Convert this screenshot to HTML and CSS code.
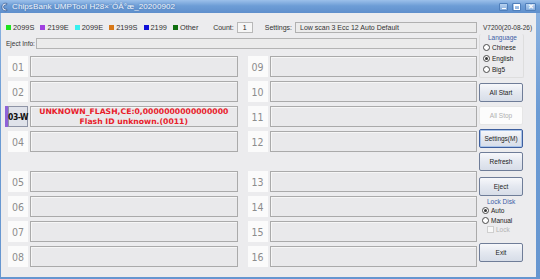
FILE: index.html
```html
<!DOCTYPE html>
<html lang="en">
<head>
  <meta charset="UTF-8" />
  <title>ChipsBank UMPTool</title>
  <link rel="stylesheet" href="styles.css">
</head>
<body>
  <div class="window">
    <!-- Title bar -->
    <div class="titlebar">
      <svg class="app-icon" width="7" height="10" viewBox="0 0 7 10">
        <path d="M6 1.5 C3 0.5 1 2.5 1 5 C1 7.5 3 9.5 6 8.5 L5.5 7 C3.8 7.6 2.6 6.5 2.6 5 C2.6 3.5 3.8 2.4 5.5 3 Z" fill="#f4f8ff" stroke="#1d3f7a" stroke-width="0.6"/>
      </svg>
      <span class="title">ChipsBank UMPTool H28×¨ÓÂ°æ_20200902</span>
      <div class="caption">
        <span class="cap cap-min"></span>
        <span class="cap cap-max"></span>
        <span class="cap cap-close">&#x2715;</span>
      </div>
    </div>

    <div class="client">
      <!-- Legend / count / settings -->
      <div class="toprow">
        <div class="main-top">
          <div class="legend">
            <span class="key"><i class="swatch c-2099s"></i>2099S</span>
            <span class="key"><i class="swatch c-2199e"></i>2199E</span>
            <span class="key"><i class="swatch c-2099e"></i>2099E</span>
            <span class="key"><i class="swatch c-2199s"></i>2199S</span>
            <span class="key"><i class="swatch c-2199"></i>2199</span>
            <span class="key"><i class="swatch c-other"></i>Other</span>
          </div>
          <span class="count-label">Count:</span>
          <span class="count-box">1</span>
          <span class="settings-label">Settings:</span>
          <span class="settings-box">Low scan 3 Ecc 12 Auto Default</span>
        </div>
        <span class="version">V7200(20-08-26)</span>
      </div>

      <div class="content">
        <div class="main">
          <div class="eject-row">
            <span class="eject-label">Eject Info:</span>
            <div class="eject-box"></div>
          </div>

          <div class="slots">
            <div class="slot-col">
              <div class="slot-group">
                <div class="slot"><span class="slot-num">01</span><div class="slot-box"></div></div>
                <div class="slot"><span class="slot-num">02</span><div class="slot-box"></div></div>
                <div class="slot"><span class="slot-num active">03-W</span>
                  <div class="slot-box error-box">
                    <span>UNKNOWN_FLASH,CE:0,0000000000000000</span>
                    <span>Flash ID unknown.(0011)</span>
                  </div>
                </div>
                <div class="slot"><span class="slot-num">04</span><div class="slot-box"></div></div>
              </div>
              <div class="slot-group">
                <div class="slot"><span class="slot-num">05</span><div class="slot-box"></div></div>
                <div class="slot"><span class="slot-num">06</span><div class="slot-box"></div></div>
                <div class="slot"><span class="slot-num">07</span><div class="slot-box"></div></div>
                <div class="slot"><span class="slot-num">08</span><div class="slot-box"></div></div>
              </div>
            </div>
            <div class="slot-col">
              <div class="slot-group">
                <div class="slot"><span class="slot-num">09</span><div class="slot-box"></div></div>
                <div class="slot"><span class="slot-num">10</span><div class="slot-box"></div></div>
                <div class="slot"><span class="slot-num">11</span><div class="slot-box"></div></div>
                <div class="slot"><span class="slot-num">12</span><div class="slot-box"></div></div>
              </div>
              <div class="slot-group">
                <div class="slot"><span class="slot-num">13</span><div class="slot-box"></div></div>
                <div class="slot"><span class="slot-num">14</span><div class="slot-box"></div></div>
                <div class="slot"><span class="slot-num">15</span><div class="slot-box"></div></div>
                <div class="slot"><span class="slot-num">16</span><div class="slot-box"></div></div>
              </div>
            </div>
          </div>
        </div>

        <!-- Right side panel -->
        <div class="side">
          <div class="group lang-group">
            <span class="group-title">Language</span>
            <label class="radio"><i class="dot"></i>Chinese</label>
            <label class="radio"><i class="dot checked"></i>English</label>
            <label class="radio"><i class="dot"></i>Big5</label>
          </div>

          <button class="btn btn-start">All Start</button>
          <button class="btn btn-disabled">All Stop</button>
          <button class="btn btn-focus">Settings(M)</button>
          <button class="btn">Refresh</button>
          <button class="btn btn-eject">Eject</button>

          <div class="group lock-group">
            <span class="group-title">Lock Disk</span>
            <label class="radio"><i class="dot checked"></i>Auto</label>
            <label class="radio"><i class="dot"></i>Manual</label>
            <label class="radio check-row"><i class="check"></i>Lock</label>
          </div>

          <button class="btn btn-exit">Exit</button>
        </div>
      </div>
    </div>
  </div>
</body>
</html>
```

FILE: styles.css
```css
* {
  box-sizing: border-box;
}

body {
  margin: 0;
  font-family: 'Liberation Sans', Arial, sans-serif;
  font-size: 7px;
  color: #222;
}

.window {
  width: 540px;
  height: 279px;
  display: flex;
  flex-direction: column;
  background: linear-gradient(180deg, #8fb5e2, #6b9bd4 40%, #6696d0);
}

/* Title bar */
.titlebar {
  height: 13px;
  display: flex;
  align-items: center;
  padding: 0 4px 0 1px;
  background: linear-gradient(180deg, #9cc0ea 0%, #6d9dd6 45%, #5f8fcc 100%);
}

.app-icon {
  margin-right: 4px;
}

.title {
  font-size: 8px;
  color: #f2f6fc;
  text-shadow: 0 0 2px #3f6aa4;
  letter-spacing: 0.1px;
  white-space: nowrap;
}

.caption {
  margin-left: auto;
  display: flex;
  gap: 4px;
  align-items: center;
}

.cap {
  display: flex;
  align-items: center;
  justify-content: center;
  width: 9px;
  height: 8px;
  border: 1px solid #4f7fbb;
  border-radius: 1px;
  background: linear-gradient(180deg, #b9d3f0, #85acdc);
  color: #fff;
  font-size: 7px;
  line-height: 1;
}

.cap-min::after {
  content: "";
  width: 4px;
  height: 1px;
  margin-top: 3px;
  background: #fff;
}

.cap-max::after {
  content: "";
  width: 4px;
  height: 3px;
  border: 1px solid #fff;
  border-top-width: 2px;
}

.cap-close {
  width: 11px;
  font-weight: bold;
}

/* Client area */
.client {
  flex: 1;
  margin: 0 4px 2px 1px;
  background: #ececee;
  display: flex;
  flex-direction: column;
}

.toprow {
  display: flex;
  align-items: center;
  height: 12px;
  margin-top: 8px;
}

.main-top {
  width: 476px;
  padding-left: 5px;
  display: flex;
  align-items: center;
}

.legend {
  display: flex;
  gap: 6px;
  font-size: 7.4px;
  color: #333;
}

.key {
  display: flex;
  align-items: center;
  gap: 2px;
}

.swatch {
  display: inline-block;
  width: 5px;
  height: 5px;
}

.c-2099s { background: #1ee31e; }
.c-2199e { background: #a040e0; }
.c-2099e { background: #38f0f0; }
.c-2199s { background: #d87818; }
.c-2199  { background: #1010d8; }
.c-other { background: #107010; }

.count-label {
  margin-left: auto;
  color: #333;
}

.count-box {
  width: 16px;
  height: 11px;
  margin: 0 12px 0 3px;
  background: #f6f6f6;
  border: 1px solid #b8b8b8;
  display: flex;
  align-items: center;
  justify-content: center;
}

.settings-label {
  margin-right: 3px;
  color: #333;
}

.settings-box {
  width: 182px;
  height: 11px;
  padding-left: 4px;
  background: #ebebeb;
  border: 1px solid #b0b0b0;
  display: flex;
  align-items: center;
  color: #333;
}

.version {
  margin-left: 6px;
  font-size: 6.5px;
  color: #333;
  white-space: nowrap;
}

.content {
  flex: 1;
  display: flex;
}

.main {
  width: 476px;
  padding-left: 5px;
}

.eject-row {
  display: flex;
  align-items: center;
  height: 12px;
  margin-top: 4px;
}

.eject-label {
  width: 30px;
  color: #333;
  font-size: 6.5px;
  white-space: nowrap;
}

.eject-box {
  flex: 1;
  height: 11px;
  background: #ebebeb;
  border: 1px solid #b4b4b4;
}

/* Slots */
.slots {
  display: grid;
  grid-template-columns: 1fr 1fr;
  column-gap: 10px;
  margin: 7px 0 0 2px;
}

.slot-col {
  display: flex;
  flex-direction: column;
  gap: 19px;
}

.slot-group {
  display: flex;
  flex-direction: column;
  gap: 4px;
}

.slot {
  display: flex;
  height: 21px;
}

.slot-num {
  width: 20px;
  flex: none;
  margin-right: 2px;
  background: #fbfbfb;
  color: #8c8c8c;
  font-family: 'DejaVu Sans Condensed', 'DejaVu Sans', sans-serif;
  font-stretch: condensed;
  font-size: 10.5px;
  display: flex;
  align-items: center;
  justify-content: center;
  white-space: nowrap;
}

.slot-num.active {
  background: #dfe2ea;
  border: 1px solid #8e94a6;
  color: #111;
  font-weight: bold;
  font-size: 8.5px;
  box-shadow: -3px 0 0 #8f62d8;
  letter-spacing: -0.5px;
}

.slot-box {
  flex: 1;
  background: #e9e9eb;
  border: 1px solid #aaaaaa;
  box-shadow: inset 1px 1px 0 #f6f6f6;
}

.error-box {
  display: flex;
  flex-direction: column;
  align-items: center;
  justify-content: center;
  color: #e8202a;
  font-family: 'DejaVu Sans', sans-serif;
  font-weight: bold;
  font-size: 7.7px;
  line-height: 9.6px;
  white-space: nowrap;
  overflow: hidden;
}

/* Side panel */
.side {
  width: 50px;
  padding: 1px 0 0 2px;
  display: flex;
  flex-direction: column;
  align-items: flex-start;
}

.group {
  display: flex;
  flex-direction: column;
  width: 45px;
}

.lang-group {
  height: 44px;
  border: 1px solid #dedede;
  border-top: none;
  border-radius: 2px;
}

.group-title {
  color: #3d5ea6;
  font-size: 6.5px;
  height: 8px;
  line-height: 8px;
  padding-left: 8px;
}

.radio {
  display: flex;
  align-items: center;
  gap: 2px;
  height: 11px;
  padding-left: 3px;
  font-size: 6.5px;
  color: #222;
}

.dot {
  width: 7px;
  height: 7px;
  border: 1px solid #4a4a4a;
  border-radius: 50%;
  background: #fff;
  display: flex;
  align-items: center;
  justify-content: center;
}

.dot.checked::after {
  content: "";
  width: 3px;
  height: 3px;
  border-radius: 50%;
  background: #333;
}

.check-row {
  padding-left: 8px;
  color: #b4b4b4;
}

.check {
  width: 7px;
  height: 7px;
  border: 1px solid #cfcfcf;
  background: #f8f8f8;
}

.btn {
  width: 44px;
  height: 19px;
  padding: 0;
  margin-top: 4px;
  font-family: 'Liberation Sans', Arial, sans-serif;
  font-size: 6.5px;
  color: #222;
  background: linear-gradient(180deg, #f7f8fb, #e4e8f0 50%, #d7dde8);
  border: 1px solid #6f7d98;
  border-radius: 2px;
}

.btn-start {
  margin-top: 5px;
}

.btn-disabled {
  background: #fcfcfc;
  border-color: #e6e6e6;
  color: #b0b0b0;
}

.btn-focus {
  border-color: #3e5f9e;
  box-shadow: inset 0 0 0 1px #a9c4ea;
}

.btn-eject {
  margin-top: 6px;
}

.lock-group {
  margin-top: 2px;
}

.lock-group .radio {
  height: 9.5px;
}

.btn-exit {
  margin-top: 8px;
}
```
